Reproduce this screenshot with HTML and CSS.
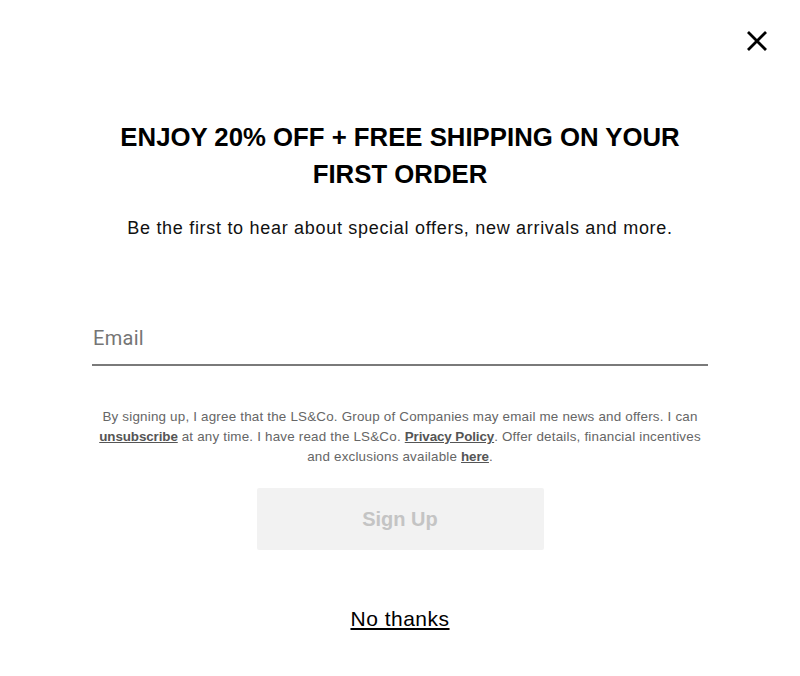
FILE: index.html
```html
<!DOCTYPE html>
<html lang="en">
<head>
<meta charset="utf-8">
<link rel="stylesheet" href="styles.css">
</head>
<body>
<div class="modal">
  <button class="close" aria-label="Close">
    <svg width="22" height="22" viewBox="0 0 22 22"><path d="M2 2 L20 20 M20 2 L2 20" stroke="#000" stroke-width="2.8" fill="none"/></svg>
  </button>
  <h1 class="title">ENJOY 20% OFF + FREE SHIPPING ON YOUR FIRST ORDER</h1>
  <p class="sub">Be the first to hear about special offers, new arrivals and more.</p>
  <div class="field"><span class="placeholder">Email</span></div>
  <p class="legal">By signing up, I agree that the LS&amp;Co. Group of Companies may email me news and offers. I can <a href="#">unsubscribe</a> at any time. I have read the LS&amp;Co. <a href="#">Privacy Policy</a>. Offer details, financial incentives and exclusions available <a href="#">here</a>.</p>
  <button class="signup">Sign Up</button>
  <a class="nothanks" href="#">No thanks</a>
</div>
</body>
</html>
```
FILE: styles.css
```css
html, body { margin: 0; padding: 0; background: #fff; }
body { font-family: "Liberation Sans", Arial, sans-serif; }
.modal {
  position: relative;
  width: 800px;
  height: 676px;
  display: flex;
  flex-direction: column;
  align-items: center;
  box-sizing: border-box;
  padding-top: 119px;
}
.close {
  position: absolute;
  top: 30px;
  left: 746px;
  width: 22px;
  height: 22px;
  padding: 0;
  border: 0;
  background: none;
}
.close svg { display: block; }
.title {
  margin: 0;
  width: 600px;
  text-align: center;
  font-size: 25.75px;
  line-height: 37px;
  font-weight: 700;
  color: #000;
}
.sub {
  margin: 24px 0 0;
  font-size: 18px;
  line-height: 22px;
  letter-spacing: 0.7px;
  color: #111;
}
.field {
  margin-top: 87px;
  width: 616px;
  height: 40px;
  border-bottom: 2px solid #7a7a7a;
  box-sizing: border-box;
  display: flex;
  align-items: flex-start;
}
.placeholder {
  font-family: Roboto, "Liberation Sans", sans-serif;
  font-size: 20px;
  line-height: 24px;
  color: #757575;
  padding-left: 1px;
  letter-spacing: 0.3px;
}
.legal {
  margin: 41px 0 0;
  width: 616px;
  text-align: center;
  font-size: 13.4px;
  line-height: 20px;
  letter-spacing: 0.2px;
  color: #666;
}
.legal a { color: #555; font-weight: 700; text-decoration: underline; letter-spacing: -0.1px; }
.signup {
  margin-top: 21px;
  width: 287px;
  height: 62px;
  border: 0;
  border-radius: 2px;
  background: #f2f2f2;
  color: #c4c4c4;
  font-family: "Liberation Sans", Arial, sans-serif;
  font-weight: 700;
  font-size: 20px;
}
.nothanks {
  margin-top: 57px;
  font-size: 21px;
  line-height: 24px;
  color: #000;
  text-decoration: underline;
  letter-spacing: 0.5px;
}
```
